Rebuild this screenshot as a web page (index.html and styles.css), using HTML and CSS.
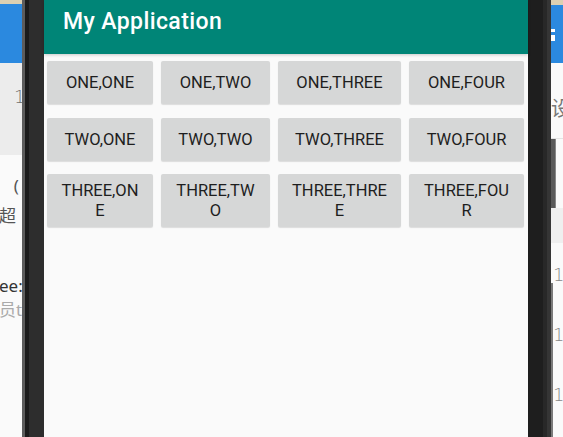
FILE: index.html
```html
<!DOCTYPE html>
<html>
<head>
<meta charset="utf-8">
<link rel="stylesheet" href="styles.css">
</head>
<body>
<div class="screen">
  <div class="bg-left">
    <div class="bg-top"></div>
    <div class="bg-blue"></div>
    <div class="bg-gray"><span class="num-one">1</span></div>
    <div class="bg-white">
      <div class="frag f1">l (</div>
      <div class="frag f2">超</div>
      <div class="frag f3">ee:</div>
      <div class="frag f4">员t</div>
    </div>
  </div>
  <div class="frame-left"><div class="fl-a"></div><div class="fl-b"></div><div class="fl-c"></div></div>
  <div class="app">
    <div class="appbar">My Application</div>
    <div class="grid">
      <div class="btn">ONE,ONE</div>
      <div class="btn">ONE,TWO</div>
      <div class="btn">ONE,THREE</div>
      <div class="btn">ONE,FOUR</div>
      <div class="btn">TWO,ONE</div>
      <div class="btn">TWO,TWO</div>
      <div class="btn">TWO,THREE</div>
      <div class="btn">TWO,FOUR</div>
      <div class="btn tall">THREE,ON<br>E</div>
      <div class="btn tall">THREE,TW<br>O</div>
      <div class="btn tall">THREE,THRE<br>E</div>
      <div class="btn tall">THREE,FOU<br>R</div>
    </div>
  </div>
  <div class="frame-right"><div class="fr-a"></div><div class="fr-b"></div><div class="fr-c"></div></div>
  <div class="bg-right">
    <div class="bg-top r"></div>
    <div class="bg-blue r"><div class="menu-mark"></div></div>
    <div class="r-white"><span class="r-char">设</span></div>
    <div class="r-row"><div class="r-thumb"></div></div>
    <div class="r-band"></div>
    <div class="r-list">
      <div class="r-line"></div>
      <div class="r-nums">
        <div class="r-num n1">10</div>
        <div class="r-num n2">15</div>
        <div class="r-num n3">18</div>
      </div>
    </div>
  </div>
</div>
</body>
</html>
```

FILE: styles.css
```css
* { box-sizing: border-box; }
html, body { margin: 0; padding: 0; }
body { width: 563px; height: 437px; overflow: hidden; background: #fafafa; font-family: Roboto, "Noto Sans", "Noto Sans CJK SC", sans-serif; }
.screen { display: flex; width: 563px; height: 437px; }

.bg-left { width: 22px; flex: none; display: flex; flex-direction: column; overflow: hidden; }
.bg-top { height: 4px; background: #dcd0b2; flex: none; }
.bg-top.r { height: 5px; }
.bg-blue { height: 59px; background: #2b89df; flex: none; }
.bg-blue.r { height: 58px; padding-top: 24px; }
.bg-gray { height: 92px; background: #ececec; flex: none; padding: 24px 0 0 14px; }
.num-one { font-family: "DejaVu Sans", sans-serif; font-weight: 300; font-size: 18px; line-height: 20px; color: #707070; }
.bg-white { flex: 1; background: #fafafa; padding-top: 20px; }
.frag { white-space: nowrap; font-size: 17px; line-height: 22px; font-family: "Noto Sans", "Noto Sans CJK SC", sans-serif; }
.f1 { color: #555; margin-left: -5px; letter-spacing: 5px; }
.f2 { color: #555; margin-top: 8px; margin-left: -1px; }
.f3 { color: #333; margin-top: 48px; margin-left: -1px; font-weight: 400; }
.f4 { color: #aaa; margin-top: 2px; margin-left: -1px; }

.frame-left { width: 22px; flex: none; display: flex; }
.fl-a { width: 3px; background: #5c5c5c; }
.fl-b { width: 4px; background: #1b1b1b; }
.fl-c { flex: 1; background: #2d2d2d; }

.app { width: 484px; flex: none; background: #fafafa; display: flex; flex-direction: column; }
.appbar { height: 54px; flex: none; background: #008577; color: #fff; font-weight: 500; font-size: 23px; letter-spacing: 0.4px; line-height: 26px; padding: 9px 0 0 19px; box-shadow: 0 1px 3px rgba(0,0,0,0.2); position: relative; }
.grid { display: grid; grid-template-columns: 106px 109px 123px 115px; grid-template-rows: 43px 43px 52px; column-gap: 8px; row-gap: 14px; padding: 7px 0 0 3px; }
.btn { background: #d6d7d7; border-radius: 2px; box-shadow: 0 1px 1px rgba(0,0,0,0.12); display: flex; align-items: center; justify-content: center; text-align: center; color: #1e1e1e; font-size: 16.5px; line-height: 20px; }
.btn.tall { margin-top: -1px; }

.frame-right { width: 23px; flex: none; display: flex; }
.fr-a { width: 15px; background: #1e1e1e; }
.fr-b { width: 4px; background: #282828; }
.fr-c { width: 4px; background: #353535; }

.bg-right { flex: 1; display: flex; flex-direction: column; overflow: hidden; }
.menu-mark { width: 4px; height: 12px; border-top: 3px solid #fff; border-bottom: 3px solid #fff; background: linear-gradient(#2b89df 0 3px, #fff 3px 6px, #2b89df 6px); }
.r-white { height: 75px; flex: none; background: #fafafa; padding-top: 34px; overflow: hidden; }
.r-char { font-family: "Noto Sans CJK SC", sans-serif; font-size: 20px; line-height: 22px; color: #777; white-space: nowrap; }
.r-row { height: 70px; flex: none; background: #fafafa; border-top: 1px solid #e4e4e4; }
.r-thumb { width: 5px; height: 69px; background: #5a5a5a; border-right: 1px solid #888; }
.r-band { height: 35px; flex: none; background: #efefef; }
.r-list { flex: 1; background: #fafafa; display: flex; }
.r-line { width: 2px; margin-top: 40px; background: #7a7a7a; flex: none; }
.r-nums { padding-top: 22px; }
.r-num { font-family: "DejaVu Sans", sans-serif; font-weight: 300; font-size: 18px; line-height: 20px; color: #888; white-space: nowrap; }
.n2, .n3 { margin-top: 40px; }
```
